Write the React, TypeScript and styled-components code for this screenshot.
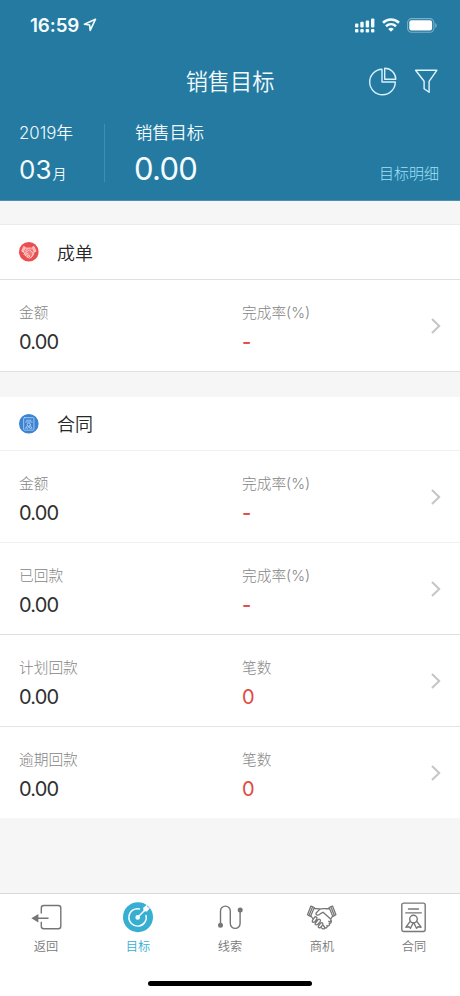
import React from "react";
import styled, { createGlobalStyle } from "styled-components";

const GlobalStyle = createGlobalStyle`
  * { box-sizing: border-box; }
  body {
    margin: 0;
    background: #f6f6f6;
    font-family: Inter, "Noto Sans CJK SC", sans-serif;
    -webkit-font-smoothing: antialiased;
  }
`;

const Screen = styled.div`
  width: 460px;
  height: 996px;
  display: flex;
  flex-direction: column;
  background: #f6f6f6;
  overflow: hidden;
`;

const Header = styled.header`
  height: 201px;
  flex: none;
  background: #247aa1;
  border-bottom: 1px solid #4d8fae;
  color: #f4fbfe;
`;

const StatusBar = styled.div`
  height: 50px;
  display: flex;
  align-items: center;
  justify-content: space-between;
  padding: 0 23px 0 30px;
`;

const StatusGroup = styled.div<{ $gap: number }>`
  display: flex;
  align-items: center;
  gap: ${(p) => p.$gap}px;
`;

const Clock = styled.span`
  padding-top: 1px;
  font-size: 18.8px;
  line-height: 24px;
  font-weight: 600;
  letter-spacing: -0.1px;
`;

const NavBar = styled.div`
  height: 62px;
  display: grid;
  grid-template-columns: 92px 1fr 92px;
  align-items: center;
`;

const NavTitle = styled.h1`
  grid-column: 2;
  margin: 0;
  padding-top: 1px;
  text-align: center;
  font-size: 22.2px;
  line-height: 30px;
  font-weight: 350;
`;

const NavActions = styled.div`
  display: flex;
  align-items: center;
  gap: 17px;
`;

const Summary = styled.div`
  height: 88px;
  display: flex;
  padding: 8px 21px 0 19px;
`;

const Period = styled.div`
  width: 86px;
  height: 58px;
  margin-top: 4px;
  border-right: 1px solid #408fb3;
`;

const PeriodYear = styled.div`
  margin-top: -3px;
  font-size: 16.8px;
  line-height: 24px;
  font-weight: 350;
  white-space: nowrap;
`;

const PeriodMonth = styled.div`
  margin-top: 7px;
  font-size: 26px;
  line-height: 36px;
  font-weight: 400;
  small { font-size: 14px; font-weight: 350; margin-left: 1px; }
`;

const Total = styled.div`
  flex: 1;
  padding: 1px 0 0 30px;
`;

const TotalLabel = styled.div`
  font-size: 17.3px;
  line-height: 24px;
  font-weight: 350;
`;

const TotalValue = styled.div`
  margin: 6px 0 0 -1px;
  font-size: 31px;
  line-height: 36px;
  font-weight: 400;
  letter-spacing: -0.7px;
`;

const DetailLink = styled.a`
  margin-top: 42px;
  font-size: 15px;
  line-height: 24px;
  font-weight: 300;
  color: #a2e1fa;
`;

const Card = styled.section<{ $first?: boolean }>`
  flex: none;
  margin-top: ${(p) => (p.$first ? 23 : 25)}px;
  border-top: ${(p) => (p.$first ? "1px solid #ececec" : "none")};
  background: #fff;
`;

const CardHeader = styled.div<{ $strong?: boolean }>`
  height: ${(p) => (p.$strong ? 55 : 54)}px;
  display: flex;
  align-items: center;
  gap: 18px;
  padding-left: 19px;
  border-bottom: 1px solid ${(p) => (p.$strong ? "#dfdfdf" : "#f0f0f0")};
`;

const CardTitle = styled.h2`
  margin: 0;
  padding-top: 3px;
  font-size: 18px;
  line-height: 28px;
  font-weight: 350;
  color: #282828;
`;

const MetricRow = styled.div<{ $line: string }>`
  height: 92px;
  display: grid;
  grid-template-columns: 223px 1fr 12px;
  padding: 21px 18px 0 19px;
  border-bottom: 1px solid ${(p) => p.$line};
`;

const Label = styled.div`
  font-size: 14.7px;
  line-height: 24px;
  font-weight: 300;
  color: #858585;
`;

const Value = styled.div<{ $red?: boolean; $dash?: boolean }>`
  margin-top: 4px;
  font-size: 20px;
  line-height: 26px;
  font-weight: ${(p) => (p.$dash ? 500 : 400)};
  letter-spacing: -0.8px;
  color: ${(p) => (p.$red ? "#df4a42" : "#303030")};
`;

const Arrow = styled.svg`
  margin-top: 16px;
`;

const TabBar = styled.nav`
  margin-top: auto;
  height: 103px;
  flex: none;
  display: grid;
  grid-template-columns: repeat(5, 92px);
  grid-template-rows: 87px 16px;
  background: #fff;
  border-top: 1px solid #dadada;
`;

const Tab = styled.div<{ $active?: boolean }>`
  display: flex;
  flex-direction: column;
  align-items: center;
  padding-top: 7px;
  font-size: 12.2px;
  line-height: 20px;
  font-weight: 350;
  color: ${(p) => (p.$active ? "#36afd3" : "#777777")};
  svg { margin-bottom: 4px; }
`;

const HomeIndicator = styled.div`
  grid-column: 1 / -1;
  justify-self: center;
  width: 164px;
  height: 5px;
  border-radius: 3px;
  background: #000;
`;

const LocationIcon = () => (
  <svg width="14" height="14" viewBox="0 0 14 14" fill="none" stroke="currentColor" strokeWidth="1.6" strokeLinejoin="round">
    <path d="M12.5 1.2 1.4 6.2l5.2.8.6 5.4z" />
  </svg>
);

const SignalIcon = () => (
  <svg width="20" height="15" viewBox="0 0 20 15" fill="currentColor">
    <rect x="0" y="5.4" width="3.4" height="4" rx="1" />
    <rect x="5.3" y="3.8" width="3.4" height="5.6" rx="1" />
    <rect x="10.7" y="2.4" width="3.4" height="7" rx="1" />
    <rect x="16" y="0.6" width="3.4" height="8.8" rx="1" />
    {[0, 5.3, 10.7, 16].map((x) => (
      <rect key={x} x={x} y="11" width="3.4" height="3.4" rx="1" />
    ))}
  </svg>
);

const WifiIcon = () => (
  <svg width="18" height="14" viewBox="0 0 18 14" fill="none" stroke="currentColor" strokeWidth="2.6">
    <path d="M1 4.7C5.5.4 12.5.4 17 4.7M4 8.2c2.9-2.6 7.1-2.6 10 0" />
    <path d="M9 13.7 6.2 10.9q2.8-2.2 5.6 0z" fill="currentColor" stroke="none" />
  </svg>
);

const BatteryIcon = () => (
  <svg width="30" height="15" viewBox="0 0 30 15">
    <rect x=".6" y=".6" width="26.3" height="13.6" rx="4" fill="none" stroke="#79b0c8" strokeWidth="1.1" />
    <rect x="2.3" y="2.3" width="22.8" height="10.2" rx="2.2" fill="#fff" />
    <path d="M28.2 5v5q1.5-.8 1.5-2.5T28.2 5z" fill="#79b0c8" />
  </svg>
);

const PieIcon = () => (
  <svg width="29" height="29" viewBox="0 0 29 29" fill="none" stroke="#d5f2fc" strokeWidth="1.4" strokeLinejoin="round">
    <path d="M14 2.2A12.8 12.8 0 1 0 27.3 15H14z" />
    <path d="M16.7 1.2v11.1h11.1A11.1 11.1 0 0 0 16.7 1.2z" />
  </svg>
);

const FunnelIcon = () => (
  <svg width="24" height="26" viewBox="0 0 24 26" fill="none" stroke="#e0f6fe" strokeWidth="1.4" strokeLinejoin="round">
    <path d="M1.6 2.3h21.2l-7.7 11v11l-5-3.6v-7.4z" />
  </svg>
);

const Handshake = () => (
  <g fill="none" stroke="currentColor" strokeLinejoin="round" strokeLinecap="round">
    <path d="M4.2 1 .8 9.7l3 1.8L7.6 2.5zM25.8 1l3.4 8.7-3 1.8-3.8-9z" />
    <path d="m5.8 2-3.5 8.5M24.2 2l3.5 8.5" />
    <path d="m7.5 3.5 5.5.3M22.5 3.5c-3.2.9-6.6-.8-9.2.6L9.4 8c-.8 2.6 2.8 2.8 4.4.6l2.6-1.4 7.2 6.6c2 1.8.2 3.9-1.6 2.5M4.3 11.2l1.9 2.4M25.8 11.4 24 14" />
    <path d="m5.8 15.3 2-3c1.2-1.2 3.1.1 2.3 1.7l-2 2.8c-1.5 1.3-3.2 0-2.3-1.5zM8.6 18.3l2.8-3.7c1.3-1 3 .2 2.2 1.7l-2.5 3c-1.4 1.2-3.3.3-2.5-1zM11.7 21l2.2-2.9c1.4-.9 2.9.3 2.1 1.8l-2 2.3c-1.2 1.2-3 .2-2.3-1.2z" />
    <path d="m14.2 22.5 1.7 1.2c1.6.8 2.9-.7 1.9-1.9L16.2 20.2M17.8 22.6c1.8 1.2 3.5-.6 2.4-2.1M20.3 20.7c1.9.8 3.3-1 2.1-2.5M22.4 18.4c1.8.3 2.9-1.3 1.7-2.8" />
  </g>
);

const Certificate = () => (
  <g fill="none" stroke="currentColor" strokeLinejoin="round" strokeLinecap="round">
    <rect x=".8" y=".8" width="23.4" height="28.4" rx="2" />
    <path d="M7.5 6.7h10M4.8 10.6h15.5" />
    <circle cx="12.5" cy="16.8" r="3.8" />
    <path d="m9.2 19-4.3 5.9 3-.5 1.6 1.5 2.6-5.2M15.8 19l4.3 5.9-3-.5-1.6 1.5-2.6-5.2" />
  </g>
);

const DealBadge = () => (
  <svg width="20" height="20" viewBox="0 0 20 20" color="#ffd0ce">
    <circle cx="9.8" cy="9.8" r="9.8" fill="#ec4d4e" />
    <path d="m5 6 4-.3 6 .2 1.5 4-4 4-2.5 1-4.5-3-1.8-2.4z" fill="#ffb0ae" opacity=".45" />
    <g transform="translate(2.3 4.3) scale(.5)" strokeWidth="1.8"><Handshake /></g>
  </svg>
);

const ContractBadge = () => (
  <svg width="20" height="20" viewBox="0 0 20 20" color="#b8d7fa">
    <circle cx="9.8" cy="9.8" r="9.8" fill="#3c83d2" />
    <g transform="translate(4.3 3.3) scale(.44)" strokeWidth="1.8"><Certificate /></g>
  </svg>
);

const BackIcon = () => (
  <svg width="32" height="32" viewBox="0 0 32 32" fill="none" stroke="#757575" strokeWidth="1.4">
    <path d="M11.3 12.5V7a2.5 2.5 0 0 1 2.5-2.5h14.5a2.5 2.5 0 0 1 2.5 2.5v18.3a2.5 2.5 0 0 1-2.5 2.5H13.8a2.5 2.5 0 0 1-2.5-2.5v-4.5M8 17.2h10.5" />
    <path d="M1.4 17.2 8.4 13v8.4z" fill="#757575" stroke="none" />
  </svg>
);

const TargetIcon = () => (
  <svg width="32" height="32" viewBox="0 0 32 32" fill="none" stroke="#fff" strokeWidth="1.4">
    <circle cx="16" cy="16.2" r="15" fill="#36afd3" stroke="none" />
    <path d="M18.1 8.1A8.7 8.7 0 1 0 23.9 13.9" />
    <circle cx="15.7" cy="16.4" r="2.3" fill="#fff" stroke="none" />
    <path d="m16 16 7-7" />
    <path d="m21.6 10.2-.4-3.5 3.8-2.9.6 2.4 2.4.6-2.9 3.8z" fill="#fff" stroke="none" />
  </svg>
);

const ClueIcon = () => (
  <svg width="32" height="32" viewBox="0 0 32 32" fill="none" stroke="#757575" strokeWidth="1.4">
    <path d="M6.5 23V10a4.9 4.9 0 0 1 9.8 0v12.5a4.9 4.9 0 0 0 9.8 0V9" />
    <circle cx="6.5" cy="24.3" r="2.5" fill="#757575" stroke="none" />
    <circle cx="26.2" cy="9" r="2.5" fill="#757575" stroke="none" />
  </svg>
);

const HandshakeIcon = () => (
  <svg width="32" height="32" viewBox="0 0 32 32" strokeWidth="1.3">
    <g transform="translate(.7 4)"><Handshake /></g>
  </svg>
);

const ContractIcon = () => (
  <svg width="32" height="32" viewBox="0 0 32 32" strokeWidth="1.4">
    <g transform="translate(3 1.3)"><Certificate /></g>
  </svg>
);

type Metric = { label: string; value: string; side: string; result: string; line: string };

const contractMetrics: Metric[] = [
  { label: "金额", value: "0.00", side: "完成率(%)", result: "-", line: "#f0f0f0" },
  { label: "已回款", value: "0.00", side: "完成率(%)", result: "-", line: "#dfdfdf" },
  { label: "计划回款", value: "0.00", side: "笔数", result: "0", line: "#e4e4e4" },
  { label: "逾期回款", value: "0.00", side: "笔数", result: "0", line: "#f6f6f6" },
];

const MetricLine = ({ label, value, side, result, line }: Metric) => (
  <MetricRow $line={line}>
    <div>
      <Label>{label}</Label>
      <Value>{value}</Value>
    </div>
    <div>
      <Label>{side}</Label>
      <Value $red $dash={result === "-"}>{result}</Value>
    </div>
    <Arrow width="12" height="18" viewBox="0 0 12 18" fill="none" stroke="#c5c5c5" strokeWidth="2">
      <path d="m2 2 7.2 7L2 16" />
    </Arrow>
  </MetricRow>
);

export default function App() {
  return (
    <>
      <GlobalStyle />
      <Screen>
        <Header>
          <StatusBar>
            <StatusGroup $gap={4}>
              <Clock>16:59</Clock>
              <LocationIcon />
            </StatusGroup>
            <StatusGroup $gap={7}>
              <SignalIcon />
              <WifiIcon />
              <BatteryIcon />
            </StatusGroup>
          </StatusBar>
          <NavBar>
            <NavTitle>销售目标</NavTitle>
            <NavActions>
              <PieIcon />
              <FunnelIcon />
            </NavActions>
          </NavBar>
          <Summary>
            <Period>
              <PeriodYear>2019年</PeriodYear>
              <PeriodMonth>03<small>月</small></PeriodMonth>
            </Period>
            <Total>
              <TotalLabel>销售目标</TotalLabel>
              <TotalValue>0.00</TotalValue>
            </Total>
            <DetailLink>目标明细</DetailLink>
          </Summary>
        </Header>

        <Card $first>
          <CardHeader $strong>
            <DealBadge />
            <CardTitle>成单</CardTitle>
          </CardHeader>
          <MetricLine label="金额" value="0.00" side="完成率(%)" result="-" line="#dfdfdf" />
        </Card>

        <Card>
          <CardHeader>
            <ContractBadge />
            <CardTitle>合同</CardTitle>
          </CardHeader>
          {contractMetrics.map((m) => (
            <MetricLine key={m.label} {...m} />
          ))}
        </Card>

        <TabBar>
          <Tab><BackIcon />返回</Tab>
          <Tab $active><TargetIcon />目标</Tab>
          <Tab><ClueIcon />线索</Tab>
          <Tab><HandshakeIcon />商机</Tab>
          <Tab><ContractIcon />合同</Tab>
          <HomeIndicator />
        </TabBar>
      </Screen>
    </>
  );
}
